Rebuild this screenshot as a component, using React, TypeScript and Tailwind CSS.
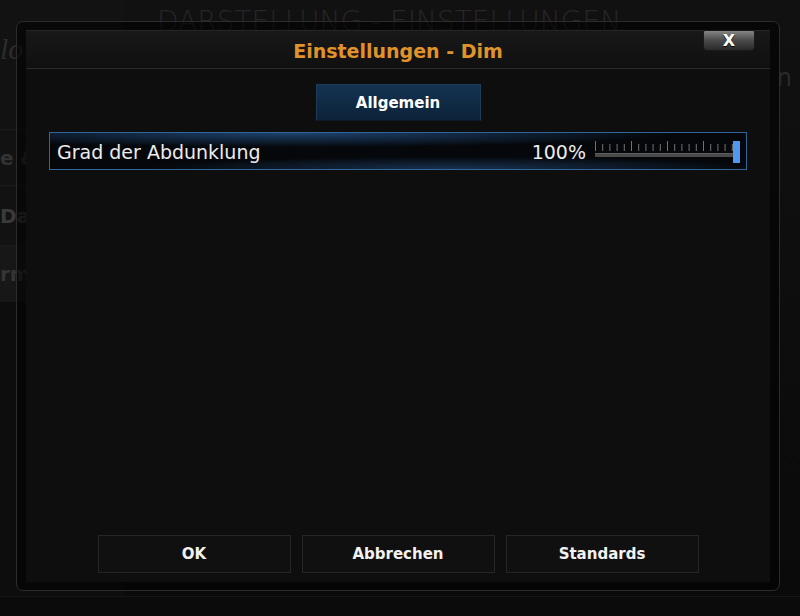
import React from "react";

const font = { fontFamily: '"DejaVu Sans", "Liberation Sans", sans-serif' };

function Slider() {
  const ticks: React.ReactNode[] = [];
  for (let i = 0; i < 20; i++) {
    const x = 0.5 + i * 7.2;
    const tall = i % 5 === 0;
    ticks.push(
      <line key={i} x1={x} x2={x} y1={tall ? 1 : 4} y2={11} stroke="#727272" strokeWidth={1} />
    );
  }
  return (
    <svg width="146" height="24" viewBox="0 0 146 24" className="block">
      {ticks}
      <rect x="0" y="13" width="140" height="4" fill="#4a4a4a" />
      <rect x="0" y="13" width="140" height="1" fill="#5e5e5e" />
      <rect x="138" y="1" width="7" height="22" fill="#4f9af0" />
    </svg>
  );
}

export default function App() {
  return (
    <div className="relative w-[800px] h-[616px] overflow-hidden bg-[#080808]" style={font}>
      {/* background Kodi window */}
      <div className="absolute inset-0 flex flex-col">
        <div className="flex h-[596px]">
          <div className="w-[125px] bg-[#121212] flex flex-col overflow-hidden">
            <div className="h-[130px] pt-[26px] border-b border-[#1c1c1c]">
              <span className="text-[30px] italic text-[#2c2c2c]" style={{ fontFamily: '"Liberation Serif", serif' }}>lo</span>
            </div>
            <div className="h-[56px] border-b border-[#1c1c1c] flex items-center text-[20px] font-bold text-[#333333]">
              e &amp;
            </div>
            <div className="h-[60px] border-b border-[#1c1c1c] flex items-center text-[20px] font-bold text-[#3a3a3a]">
              Da
            </div>
            <div className="h-[56px] bg-[#171717] flex items-center text-[20px] font-bold text-[#353535]">
              rm
            </div>
            <div className="flex-1 bg-[#0d0d0d]" />
          </div>
          <div className="flex-1 bg-gradient-to-b from-[#111111] to-[#0a0a0a] relative">
            <div className="pl-[32px] pt-[4px] text-[28px] text-[#262626] font-extralight leading-[36px]">
              DARSTELLUNG - EINSTELLUNGEN
            </div>
            <div className="absolute right-[8px] top-[60px] text-[24px] text-[#2a2a2a]">n</div>
          </div>
        </div>
        <div className="flex-1 bg-[#0b0b0b] border-t border-[#161616]" />
      </div>

      {/* dialog */}
      <div className="absolute left-[16px] top-[21px] w-[764px] h-[570px] rounded-[7px] border border-[#2c2c2c] bg-[#020202]/60 p-[8px] pl-[9px] pr-[9px]">
        <div className="w-full h-full flex flex-col bg-[#0e0e0e] border-t border-[#262626]">
          <div className="relative h-[38px] flex items-center justify-center pt-[3px] bg-gradient-to-b from-[#181818] to-[#101010] border-b border-[#2b2b2b]">
            <span className="text-[19px] font-bold text-[#e0922b] leading-none">Einstellungen - Dim</span>
            <div className="absolute right-[15px] top-[-1px] w-[52px] h-[21px] rounded-[4px] rounded-t-[2px] bg-gradient-to-b from-[#858585] via-[#4a4a4a] to-[#2a2a2a] border border-[#1a1a1a] flex items-center justify-center">
              <span className="text-[16px] font-bold text-white leading-none" style={{ textShadow: "0 1px 1px #000" }}>X</span>
            </div>
          </div>

          <div className="flex justify-center pt-[15px]">
            <div className="w-[165px] h-[37px] flex items-center justify-center pt-[2px] bg-gradient-to-b from-[#143352] to-[#0c2238] border border-[#1d3b5a] border-b-[#0a1a2a]">
              <span className="text-[15px] font-bold text-white">Allgemein</span>
            </div>
          </div>

          <div className="mx-[23px] mt-[11px] h-[38px] border border-[#32659a] flex items-center pt-[3px] pl-[7px] pr-[5px] bg-[#05070a]"
            style={{
              backgroundImage:
                "radial-gradient(ellipse 55% 40% at 35% 0%, rgba(45,105,175,0.6), rgba(0,0,0,0) 100%), radial-gradient(ellipse 45% 35% at 58% 100%, rgba(45,100,165,0.45), rgba(0,0,0,0) 100%)",
            }}>
            <span className="text-[19px] text-[#ececec] leading-none">Grad der Abdunklung</span>
            <span className="ml-auto text-[19px] text-[#ececec] leading-none">100%</span>
            <div className="ml-[9px] -mt-[2px]">
              <Slider />
            </div>
          </div>

          <div className="flex-1" />

          <div className="flex justify-center gap-[11px] pb-[9px]">
            {["OK", "Abbrechen", "Standards"].map((t) => (
              <div key={t} className="w-[193px] h-[38px] border border-[#262626] bg-[#101010] flex items-center justify-center pt-[1px]">
                <span className="text-[15px] font-bold text-[#f2f2f2]">{t}</span>
              </div>
            ))}
          </div>
        </div>
      </div>
    </div>
  );
}
